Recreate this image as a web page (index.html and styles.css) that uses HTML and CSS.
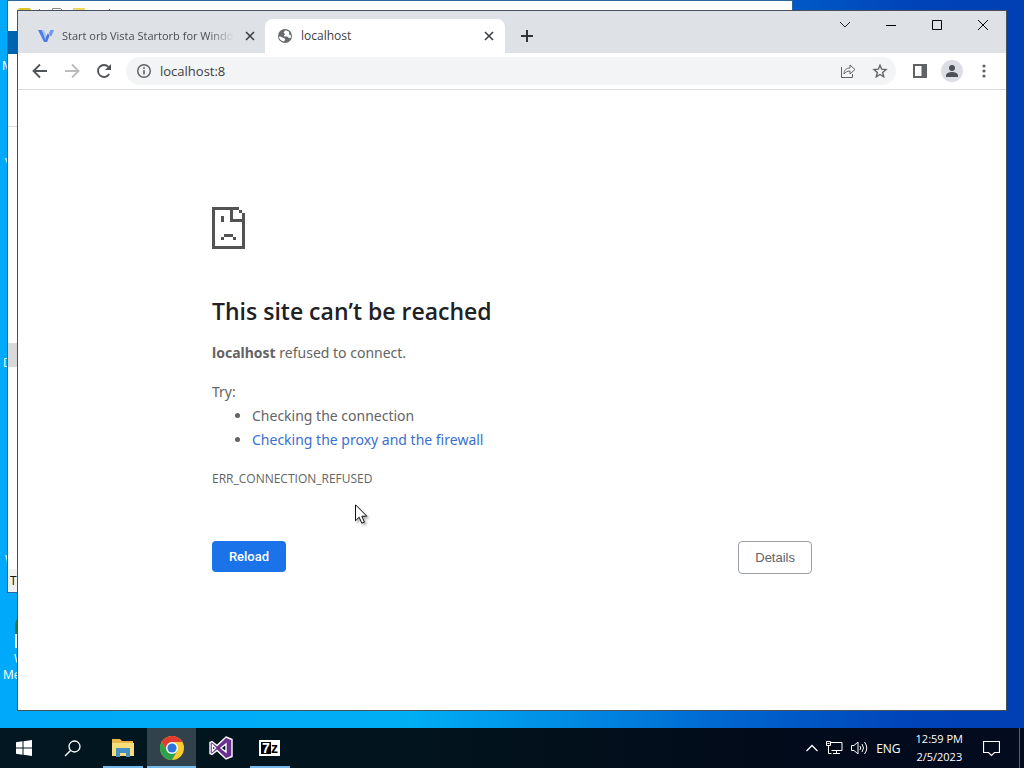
FILE: index.html
```html
<!DOCTYPE html>
<html lang="en">
<head>
    <meta charset="UTF-8">
    <meta name="viewport" content="width=device-width, initial-scale=1.0">
    <title>localhost</title>
    <link rel="stylesheet" href="styles.css">
</head>
<body>
    <div class="desktop">
        <span class="desktop-label label-1">M</span>
        <span class="desktop-label label-2">V</span>
        <span class="desktop-label label-3">D</span>
        <span class="desktop-label label-4">W</span>
        <span class="desktop-icon"></span>
        <span class="desktop-label label-5">W</span>
        <span class="desktop-label label-6">Me</span>

        <!-- explorer window behind the browser -->
        <div class="explorer">
            <div class="explorer-title">
                <svg width="100" height="16" viewBox="0 0 100 16">
                    <rect x="1" y="1" width="11" height="10" rx="1" fill="#fff6b0" stroke="#d9c52a" stroke-width="2"/>
                    <path d="M21.500 1v8M91.500 1v2" stroke="#777"/>
                    <path d="M34.500 .5h8l3 3v9h-11z" fill="#fff" stroke="#888"/>
                    <path d="M55 0h12v10H55z" fill="#ecd964"/>
                </svg>
            </div>
            <div class="explorer-file"></div>
            <div class="explorer-ribbon"></div>
            <div class="explorer-body"><div class="explorer-item"></div></div>
            <div class="explorer-status">Ti</div>
        </div>

        <div class="browser">
            <div class="tab-strip">
                <div class="tab">
                    <svg width="16" height="16" viewBox="0 0 16 16">
                        <path d="M0 2h4l4.500 12H6z" fill="#4a80ee"/>
                        <path d="M4 2h2l3 7-1 3z" fill="#a9c4fa"/>
                        <path d="M8 9l2-4 1.500 3L9 14H7z" fill="#4f74d8"/>
                        <path d="M11 5l1.500-3H16l-2.500 6h-1.500z" fill="#6d96ef"/>
                    </svg>
                    <span class="tab-title faded">Start orb Vista Startorb for Windo</span>
                    <button class="tab-close" aria-label="Close tab">
                        <svg width="10" height="10" viewBox="0 0 10 10"><path d="M1 1l8 8M9 1L1 9" stroke="#3c4043" stroke-width="1.600"/></svg>
                    </button>
                </div>
                <div class="tab active">
                    <svg width="16" height="16" viewBox="0 0 16 16">
                        <circle cx="8" cy="8" r="7" fill="#666a6e"/>
                        <path d="M2 8.500c1.500 0 2.500.5 3.500 1s2 .5 2.500 1.500-.5 1.500-1 2.500c-3-.3-5-2.500-5-5zM8.500 2.300c-.5 1-1.500 1.200-1.800 2S8 5.500 8 6.200 6.500 7 7 8s2.500.2 3.500.7 1.500 1.800 2.500 1.500 1-2 1-2.500-1.500-.7-1.800-1.500.3-1.700-.4-2.500-2-.8-3.300-1.400z" fill="#fff"/>
                    </svg>
                    <span class="tab-title">localhost</span>
                    <button class="tab-close" aria-label="Close tab">
                        <svg width="10" height="10" viewBox="0 0 10 10"><path d="M1 1l8 8M9 1L1 9" stroke="#3c4043" stroke-width="1.600"/></svg>
                    </button>
                </div>
                <button class="new-tab" aria-label="New tab">
                    <svg width="12" height="12" viewBox="0 0 12 12"><path d="M6 0v12M0 6h12" stroke="#303236" stroke-width="2"/></svg>
                </button>
                <div class="window-controls">
                    <button aria-label="Search tabs"><svg width="12" height="12" viewBox="0 0 12 12"><path d="M1 3l5 5 5-5" fill="none" stroke="#222"/></svg></button>
                    <button aria-label="Minimize"><svg width="10" height="10" viewBox="0 0 10 10"><path d="M0 5.500h10" stroke="#000"/></svg></button>
                    <button aria-label="Maximize"><svg width="10" height="10" viewBox="0 0 10 10"><path d="M.5.5h9v9h-9z" fill="none" stroke="#000"/></svg></button>
                    <button aria-label="Close"><svg width="10" height="10" viewBox="0 0 10 10"><path d="M0 0l10 10M10 0L0 10" stroke="#000"/></svg></button>
                </div>
            </div>

            <div class="toolbar">
                <button class="tool" aria-label="Back">
                    <svg width="16" height="16" viewBox="0 0 16 16"><path d="M15 8H2M8 1.500L1.500 8 8 14.500" fill="none" stroke="#505357" stroke-width="1.800"/></svg>
                </button>
                <button class="tool" aria-label="Forward">
                    <svg width="16" height="16" viewBox="0 0 16 16"><path d="M1 8h13M8 1.500L14.500 8 8 14.500" fill="none" stroke="#babcbe" stroke-width="1.800"/></svg>
                </button>
                <button class="tool" aria-label="Reload page">
                    <svg width="16" height="16" viewBox="0 0 16 16"><path d="M13.200 11A6 6 0 1 1 12.500 4" fill="none" stroke="#505357" stroke-width="1.800"/><path d="M15 1v6H9z" fill="#505357"/></svg>
                </button>
                <div class="omnibox">
                    <svg width="16" height="16" viewBox="0 0 16 16"><circle cx="8" cy="8" r="6.300" fill="none" stroke="#5f6368" stroke-width="1.500"/><path d="M8 7v4.500M8 4.300v1.700" stroke="#5f6368" stroke-width="1.600"/></svg>
                    <input type="text" aria-label="Address" value="localhost:8">
                    <button aria-label="Share">
                        <svg width="16" height="16" viewBox="0 0 16 16"><path d="M1.500 4v10.500h11V11" fill="none" stroke="#5f6368"/><path d="M4 11c0-4 2.500-6 6-6V2l5 4.500L10 11V8C7.500 8 5.500 9 4 11z" fill="none" stroke="#5f6368" stroke-linejoin="round"/></svg>
                    </button>
                    <button aria-label="Bookmark this tab">
                        <svg width="16" height="16" viewBox="0 0 16 16"><path d="M8 2.200l1.700 4 4.300.4-3.300 2.900 1 4.300L8 11.500l-3.700 2.300 1-4.300L2 6.600l4.300-.4z" fill="none" stroke="#5f6368" stroke-width="1.400"/></svg>
                    </button>
                </div>
                <button class="tool-right" aria-label="Side panel">
                    <svg width="16" height="16" viewBox="0 0 16 16"><path d="M2 2h12v12H2z" fill="none" stroke="#5f6368" stroke-width="2"/><path d="M9.500 2H14v12H9.500z" fill="#5f6368"/></svg>
                </button>
                <button class="tool-right profile" aria-label="Profile">
                    <svg width="22" height="22" viewBox="0 0 22 22"><circle cx="11" cy="11" r="11" fill="#dcdde5"/><circle cx="11" cy="8" r="3" fill="#4c5058"/><path d="M5 17v-1.500c0-2.300 3-3.500 6-3.500s6 1.200 6 3.500V17z" fill="#4c5058"/></svg>
                </button>
                <button class="tool-right" aria-label="Menu">
                    <svg width="16" height="16" viewBox="0 0 16 16"><g fill="#5f6368"><circle cx="8" cy="3" r="1.600"/><circle cx="8" cy="8" r="1.600"/><circle cx="8" cy="13" r="1.600"/></g></svg>
                </button>
            </div>

            <div class="page">
                <main class="error">
                    <svg class="sad-page" width="33" height="42" viewBox="0 0 11 14" shape-rendering="crispEdges">
                        <path fill="#535353" d="M0 0h9v1H7v3h4v10H0zM9 1h1v1H9zM10 2h1v2h-1zM1 1v12h9V5H6V1zM3 3h1v2H3zM4 9h3v1H4zM3 10h1v1H3zM7 10h1v1H7z" fill-rule="evenodd"/>
                    </svg>
                    <h1>This site can’t be reached</h1>
                    <p><strong>localhost</strong> refused to connect.</p>
                    <div class="suggestions">
                        <p>Try:</p>
                        <ul>
                            <li>Checking the connection</li>
                            <li><a href="#buttons">Checking the proxy and the firewall</a></li>
                        </ul>
                    </div>
                    <div class="error-code">ERR_CONNECTION_REFUSED</div>
                    <div class="buttons" id="buttons">
                        <button class="reload">Reload</button>
                        <button class="details">Details</button>
                    </div>
                </main>
            </div>
        </div>

        <svg class="cursor" width="14" height="21" viewBox="0 0 14 21"><path d="M.5.800v16l3.700-3.600 2.600 6 2.600-1.100-2.600-5.900h5z" fill="#fff" stroke="#111"/></svg>
    </div>

    <div class="taskbar">
        <button class="start" aria-label="Start">
            <svg width="16" height="16" viewBox="0 0 16 16" fill="#fff"><path d="M0 2.200L6.500 1.300v6.200H0zM7.500 1.200L16 0v7.500H7.500zM0 8.500h6.500v6.200L0 13.800zM7.500 8.500H16V16l-8.500-1.200z"/></svg>
        </button>
        <button class="search" aria-label="Search">
            <svg width="17" height="17" viewBox="0 0 17 17" fill="none" stroke="#fff"><circle cx="10.500" cy="6.500" r="5.500" stroke-width="1.300"/><path d="M6.500 10.500L1 16" stroke-width="1.500"/></svg>
        </button>
        <button class="running" aria-label="File Explorer">
            <svg width="22" height="18" viewBox="0 0 22 18"><path d="M0 0h8l2 2h11v15H0z" fill="#e9b64a"/><path d="M0 4h22v13H0z" fill="#fbdc7b"/><path d="M4 9h14v9h-4v-4H8v4H4z" fill="#4591c5"/></svg>
        </button>
        <button class="running current" aria-label="Google Chrome">
            <svg width="24" height="24" viewBox="0 0 24 24">
                <circle cx="12" cy="12" r="12" fill="#f9cb2e"/>
                <path d="M1.600 6A12 12 0 0 1 22.400 6H12L6.800 15z" fill="#e33b2e"/>
                <path d="M1.600 6A12 12 0 0 0 12 24l5.200-9H6.800z" fill="#2ba24c"/>
                <circle cx="12" cy="12" r="6" fill="#fff"/>
                <circle cx="12" cy="12" r="4.600" fill="#2f74dc"/>
            </svg>
        </button>
        <button aria-label="Visual Studio">
            <svg width="24" height="24" viewBox="0 0 24 24"><path d="M17 1l6 2.500v17L17 23l-9-8.500L3 18.500 1 17.500v-11l2-1 5 4zM17 8l-5 4 5 4zM3.500 9v6L6.500 12z" fill="#68318f" stroke="#fff" stroke-width="1.400" fill-rule="evenodd"/></svg>
        </button>
        <button class="running" aria-label="7-Zip"><span class="zip"><b>7</b>z</span></button>

        <div class="tray">
            <svg width="12" height="8" viewBox="0 0 12 8"><path d="M.5 7L6 1.500 11.500 7" fill="none" stroke="#fff" stroke-width="1.300"/></svg>
            <svg width="17" height="14" viewBox="0 0 17 14" fill="none" stroke="#fff"><path d="M5 1.500h11v8H5.500M10.500 9.500v3M7 12.500h7M.5 .5h4v4h-4zM2.500 4.500v8h3M1.500 2.500h2"/></svg>
            <svg width="17" height="14" viewBox="0 0 17 14" fill="none" stroke="#fff"><path d="M.5 4.500H3l4-3.500v12L3 9.500H.5zM9 5q1.500 2 0 4M11 3q3 4 0 8M13.500 1q4.500 6 0 12"/></svg>
            <span class="lang">ENG</span>
            <div class="clock">12:59 PM<br>2/5/2023</div>
            <button class="notifications" aria-label="Notifications">
                <svg width="17" height="17" viewBox="0 0 17 17"><path d="M.5 1.500h16v11h-5l-3 3-3-3h-5z" fill="none" stroke="#fff" stroke-width="1.200"/></svg>
            </button>
        </div>
    </div>
</body>
</html>
```

FILE: styles.css
```css
* {
    box-sizing: border-box;
}
body {
    margin: 0;
    height: 100vh;
    display: flex;
    flex-direction: column;
    overflow: hidden;
    font-family: "Open Sans", "Noto Sans", sans-serif;
    font-size: 12px;
}
button {
    border: 0;
    padding: 0;
    background: none;
    font: inherit;
}
svg {
    display: block;
    flex-shrink: 0;
}

/* desktop */
.desktop {
    position: relative;
    flex: 1;
    background: linear-gradient(to right, #00a9fa 0%, #00aef4 40%, #008de6 55%, #0064cf 72%, #0042b8 90%, #0040b4 100%);
}
.desktop-label {
    position: absolute;
    color: #fff;
    line-height: 16px;
}
.label-1 { left: 2px; top: 58px; }
.label-2 { left: 5px; top: 155px; }
.label-3 { left: 3px; top: 355px; }
.label-4 { left: 5px; top: 552px; }
.label-5 { left: 14px; top: 651px; }
.label-6 { left: 3px; top: 667px; }
.desktop-icon {
    position: absolute;
    left: 15px;
    top: 614px;
    width: 24px;
    height: 34px;
    border-radius: 12px 0 0 0;
    background: linear-gradient(#2c7d3c 60%, #e8f4fa 60%);
}

/* explorer window */
.explorer {
    position: absolute;
    left: 7px;
    top: 0;
    right: 231px;
    bottom: 135px;
    display: flex;
    flex-direction: column;
    border: 1px solid #2b66a0;
    background: #fff;
}
.explorer-title {
    height: 30px;
    padding: 7px 10px;
}
.explorer-file {
    height: 23px;
    background: #0063b1;
}
.explorer-ribbon {
    height: 73px;
    border-bottom: 1px solid #dadbdc;
}
.explorer-body {
    flex: 1;
    padding-top: 216px;
}
.explorer-item {
    height: 24px;
    background: #d9d9d9;
}
.explorer-status {
    height: 23px;
    padding-left: 2px;
    line-height: 24px;
    background: #f0f0f0;
    color: #111;
}

/* browser window */
.browser {
    position: absolute;
    left: 17px;
    top: 10px;
    right: 17px;
    bottom: 17px;
    display: flex;
    flex-direction: column;
    border: 1px solid #45525e;
    background: #fff;
}
.tab-strip {
    display: flex;
    align-items: flex-end;
    height: 42px;
    padding-left: 8px;
    background: #dee1e6;
}
.tab {
    display: flex;
    align-items: center;
    gap: 8px;
    width: 239px;
    height: 34px;
    padding: 0 7px 0 12px;
    color: #4a4d51;
}
.tab.active {
    width: 240px;
    padding-right: 8px;
    border-radius: 8px 8px 0 0;
    background: #fff;
    color: #3c4043;
}
.tab-title {
    flex: 1;
    overflow: hidden;
    line-height: 18px;
    padding-bottom: 1px;
    white-space: nowrap;
}
.tab-title.faded {
    font-size: 11px;
    mask-image: linear-gradient(to right, #000 85%, transparent);
}
.tab-close {
    display: flex;
    align-items: center;
    justify-content: center;
    width: 16px;
    height: 16px;
}
.new-tab {
    display: flex;
    align-items: center;
    justify-content: center;
    width: 28px;
    height: 34px;
    margin-left: 8px;
}
.window-controls {
    display: flex;
    align-self: flex-start;
    margin-left: auto;
}
.window-controls button {
    display: flex;
    align-items: center;
    justify-content: center;
    width: 46px;
    height: 28px;
}
.toolbar {
    display: flex;
    align-items: center;
    height: 37px;
    padding: 0 6px;
    border-bottom: 1px solid #dadce0;
}
.tool, .tool-right {
    display: flex;
    align-items: center;
    justify-content: center;
    width: 32px;
    height: 28px;
}
.omnibox {
    display: flex;
    flex: 1;
    align-items: center;
    gap: 8px;
    height: 28px;
    margin: 0 8px 0 6px;
    padding: 0 8px 0 10px;
    border-radius: 14px;
    background: #f3f4f5;
}
.omnibox input {
    flex: 1;
    min-width: 0;
    border: 0;
    padding: 0;
    outline: 0;
    background: none;
    font: inherit;
    font-size: 13px;
    color: #3c4043;
}
.omnibox button {
    margin-left: 8px;
}

/* error page */
.page {
    flex: 1;
    padding: 117px 24px 0;
    overflow: hidden;
    color: #646464;
    font-family: "Noto Sans", "Open Sans", sans-serif;
    font-size: 14px;
    line-height: 24px;
}
.error {
    max-width: 600px;
    margin: 0 auto;
}
.error h1 {
    margin: 46px 0 14px;
    color: #202124;
    font-family: "Open Sans", "Noto Sans", sans-serif;
    font-size: 23px;
    font-weight: 600;
    line-height: 32px;
}
.error p {
    margin: 0;
}
.suggestions {
    margin-top: 15px;
}
.suggestions ul {
    margin: 0;
    padding-left: 40px;
}
.suggestions a {
    color: #3a6fd0;
    text-decoration: none;
}
.error-code {
    margin-top: 15px;
    font-family: "Open Sans", "Noto Sans", sans-serif;
    font-size: 12px;
}
.buttons {
    display: flex;
    justify-content: space-between;
    align-items: flex-start;
    margin-top: 50px;
    font-family: "Liberation Sans", Arial, sans-serif;
    font-size: 13px;
}
.reload {
    min-width: 74px;
    height: 31px;
    padding: 0 16px;
    border-radius: 4px;
    background: #1a73e8;
    color: #fff;
    font-family: Roboto, sans-serif;
    font-weight: 500;
}
.details {
    height: 33px;
    padding: 0 16px;
    border: 1px solid #9aa0a6;
    border-radius: 4px;
    color: #5f6368;
}
.cursor {
    position: absolute;
    left: 355px;
    top: 504px;
    filter: drop-shadow(2px 2px 1px rgba(0, 0, 0, 0.3));
}

/* taskbar */
.taskbar {
    display: flex;
    height: 40px;
    background: linear-gradient(to right, #021721, #02141d 40%, #020b1a 75%, #030b20);
    color: #fff;
}
.taskbar > button {
    display: flex;
    align-items: center;
    justify-content: center;
    width: 49px;
}
.taskbar > .start, .taskbar > .search {
    width: 48px;
}
.taskbar > .search {
    margin-right: 2px;
}
.taskbar .running {
    background: linear-gradient(#76b9ed, #76b9ed) center bottom / 40px 2px no-repeat;
}
.taskbar .current {
    background: #32424c;
    border-bottom: 2px solid #76b9ed;
    padding-top: 2px;
}
.zip {
    display: flex;
    align-items: center;
    justify-content: center;
    width: 21px;
    height: 16px;
    background: #fff;
    color: #000;
    font-family: "Liberation Sans", Arial, sans-serif;
    font-size: 14px;
    font-weight: bold;
    line-height: 12px;
}
.zip b {
    padding: 0 1px;
    background: #000;
    color: #fff;
}
.tray {
    display: flex;
    align-items: center;
    margin-left: auto;
    padding-right: 4px;
}
.tray > svg {
    margin-right: 8px;
}
.lang {
    margin-right: 15px;
}
.clock {
    font-size: 11px;
    line-height: 18px;
    text-align: center;
}
.notifications {
    display: flex;
    align-items: center;
    justify-content: center;
    align-self: stretch;
    width: 57px;
    border-right: 1px solid #566070;
}
```
